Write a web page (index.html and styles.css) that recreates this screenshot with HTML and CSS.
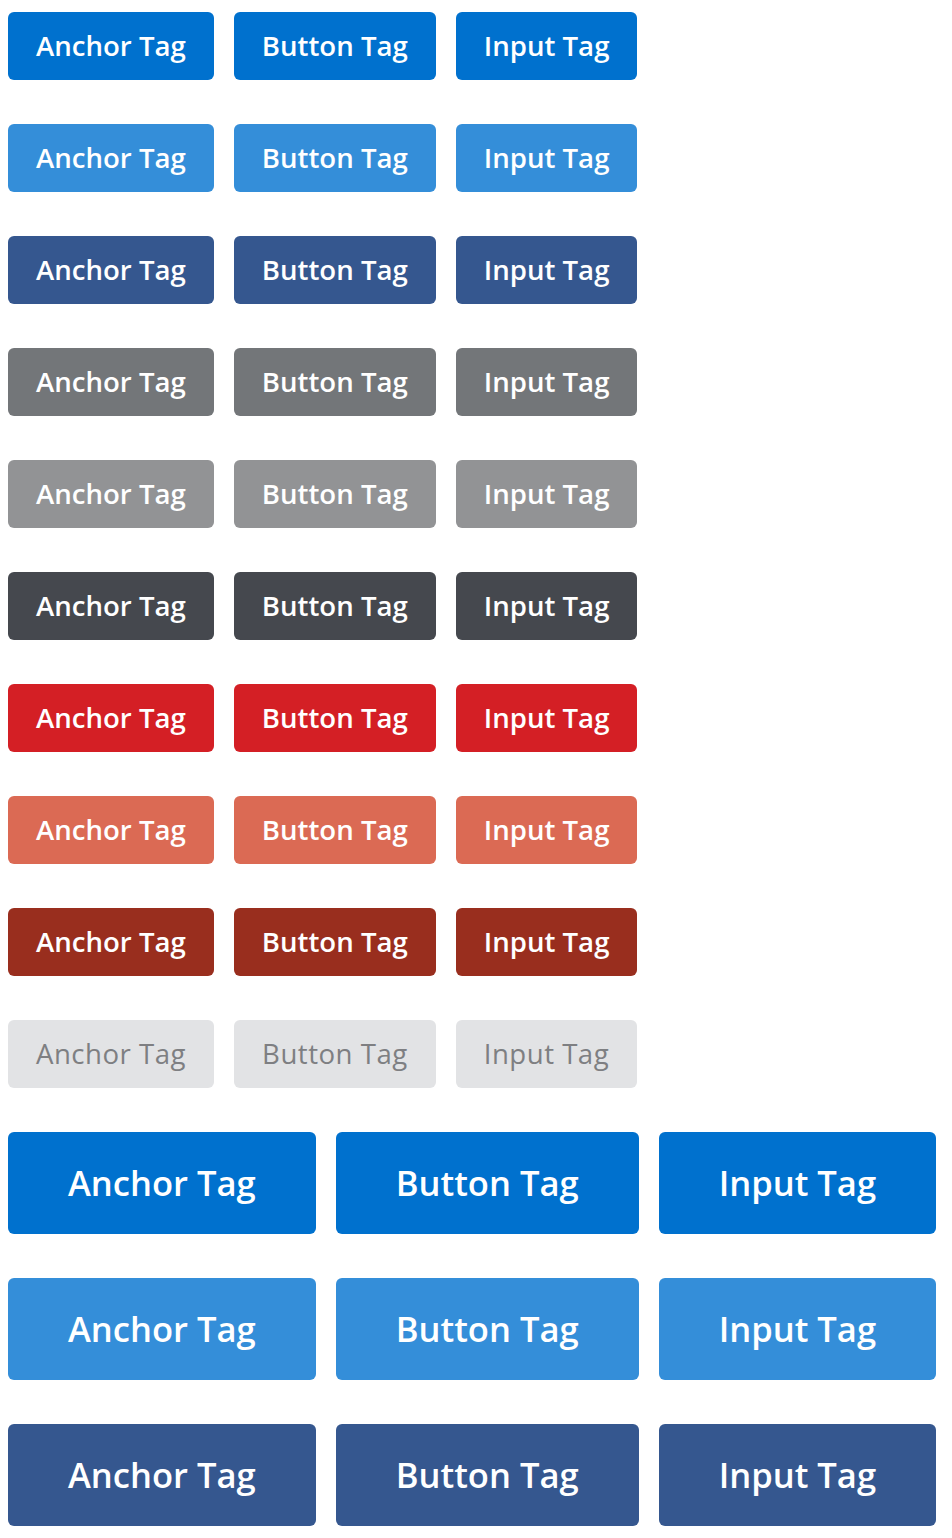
FILE: index.html
```html
<!DOCTYPE html>
<html>
<head>
<meta charset="utf-8">
<link rel="stylesheet" href="styles.css">
</head>
<body>
<div class="page">
  <div class="row"><a class="btn c1" href="#">Anchor Tag</a><button class="btn c1">Button Tag</button><input class="btn c1" type="submit" value="Input Tag"></div>
  <div class="row"><a class="btn c2" href="#">Anchor Tag</a><button class="btn c2">Button Tag</button><input class="btn c2" type="submit" value="Input Tag"></div>
  <div class="row"><a class="btn c3" href="#">Anchor Tag</a><button class="btn c3">Button Tag</button><input class="btn c3" type="submit" value="Input Tag"></div>
  <div class="row"><a class="btn c4" href="#">Anchor Tag</a><button class="btn c4">Button Tag</button><input class="btn c4" type="submit" value="Input Tag"></div>
  <div class="row"><a class="btn c5" href="#">Anchor Tag</a><button class="btn c5">Button Tag</button><input class="btn c5" type="submit" value="Input Tag"></div>
  <div class="row"><a class="btn c6" href="#">Anchor Tag</a><button class="btn c6">Button Tag</button><input class="btn c6" type="submit" value="Input Tag"></div>
  <div class="row"><a class="btn c7" href="#">Anchor Tag</a><button class="btn c7">Button Tag</button><input class="btn c7" type="submit" value="Input Tag"></div>
  <div class="row"><a class="btn c8" href="#">Anchor Tag</a><button class="btn c8">Button Tag</button><input class="btn c8" type="submit" value="Input Tag"></div>
  <div class="row"><a class="btn c9" href="#">Anchor Tag</a><button class="btn c9">Button Tag</button><input class="btn c9" type="submit" value="Input Tag"></div>
  <div class="row"><a class="btn c10" href="#">Anchor Tag</a><button class="btn c10">Button Tag</button><input class="btn c10" type="submit" value="Input Tag"></div>
  <div class="row"><a class="btn lg c1" href="#">Anchor Tag</a><button class="btn lg c1">Button Tag</button><input class="btn lg c1" type="submit" value="Input Tag"></div>
  <div class="row"><a class="btn lg c2" href="#">Anchor Tag</a><button class="btn lg c2">Button Tag</button><input class="btn lg c2" type="submit" value="Input Tag"></div>
  <div class="row"><a class="btn lg c3" href="#">Anchor Tag</a><button class="btn lg c3">Button Tag</button><input class="btn lg c3" type="submit" value="Input Tag"></div>
</div>
</body>
</html>
```
FILE: styles.css
```css
html, body {
  margin: 0;
  padding: 0;
  background: #ffffff;
}
.page {
  padding: 12px 8px 0 8px;
  display: flex;
  flex-direction: column;
  gap: 44px;
}
.row {
  display: flex;
  gap: 20px;
  align-items: flex-start;
}
.btn {
  box-sizing: border-box;
  display: inline-flex;
  align-items: center;
  justify-content: center;
  height: 68px;
  padding: 0 28px;
  margin: 0;
  border: 0;
  border-radius: 6px;
  font-family: "Open Sans", "Lato", sans-serif;
  font-weight: 600;
  font-size: 27.6px;
  line-height: 1;
  color: #ffffff;
  text-decoration: none;
  cursor: pointer;
  -webkit-appearance: none;
  appearance: none;
}
.btn.lg {
  height: 102px;
  padding: 0 60px;
  font-size: 34.6px;
}
.c1 { background: #0071ce; }
.c2 { background: #348ed9; }
.c3 { background: #35578f; }
.c4 { background: #737679; }
.c5 { background: #929395; }
.c6 { background: #45484e; }
.c7 { background: #d41f25; }
.c8 { background: #db6a54; }
.c9 { background: #992e1e; }
.c10 { background: #e2e3e5; color: #7e7f82; font-weight: 500; letter-spacing: 0.5px; }
```
